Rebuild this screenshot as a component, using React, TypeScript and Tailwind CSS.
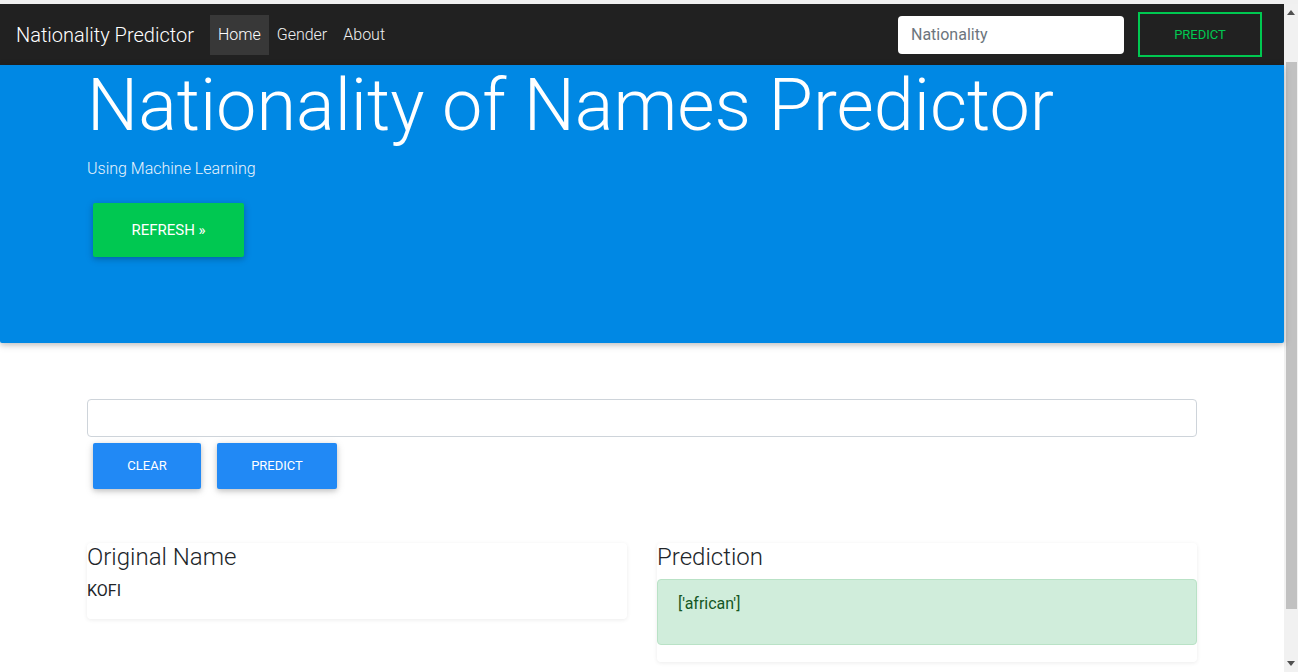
import React from 'react'

function Scrollbar() {
  return (
    <div className="w-[14px] shrink-0 bg-[#f1f1f1] flex flex-col">
      <div className="h-[17px] flex items-center justify-center">
        <svg width="8" height="5" viewBox="0 0 8 5">
          <path d="M0 5 L4 0 L8 5 Z" fill="#505050" />
        </svg>
      </div>
      <div className="mt-[41px] ml-[2px] w-[11px] h-[547px] bg-[#c1c1c1]" />
      <div className="flex-1" />
      <div className="h-[17px] flex items-center justify-center">
        <svg width="8" height="5" viewBox="0 0 8 5">
          <path d="M0 0 L8 0 L4 5 Z" fill="#505050" />
        </svg>
      </div>
    </div>
  )
}

function Navbar() {
  return (
    <nav className="h-[61px] shrink-0 bg-[#212121] flex items-center px-4">
      <span className="text-[20px] font-light text-white leading-[30px] mr-4">Nationality Predictor</span>
      <div className="flex items-center text-[16px] font-light text-[#f0f0f0]">
        <a className="h-[40px] px-2 flex items-center bg-[#383838] text-white">Home</a>
        <a className="h-[40px] px-2 flex items-center">Gender</a>
        <a className="h-[40px] px-2 flex items-center">About</a>
      </div>
      <div className="ml-auto flex items-center">
        <input
          className="w-[226px] h-[38px] rounded-[4px] bg-white px-[13px] text-[16px] text-[#495057] placeholder:text-[#6c757d] outline-none mr-2"
          placeholder="Nationality"
        />
        <button className="mx-[6px] w-[124px] h-[45px] border-2 border-[#00c851] text-[#00c851] text-[13px] uppercase">
          Predict
        </button>
      </div>
    </nav>
  )
}

export default function App() {
  return (
    <div className="h-screen w-full overflow-hidden flex flex-col bg-white font-['Roboto',sans-serif] text-[#212529]">
      <div className="h-[4px] shrink-0 bg-[#f0f0f0]" />
      <div className="flex flex-1 min-h-0">
        <div className="flex-1 min-w-0 flex flex-col">
          <Navbar />

          <section className="h-[278px] shrink-0 bg-[#0088e4] rounded-b-[2px] shadow-[0_2px_5px_0_rgba(0,0,0,0.16),0_2px_10px_0_rgba(0,0,0,0.12)] relative">
            <div className="w-[1140px] mx-auto px-[15px] pt-[5px]">
              <h1 className="text-[72px] font-light leading-[72px] text-white">Nationality of Names Predictor</h1>
              <p className="mt-[15px] text-[16px] leading-6 font-light text-[#e8f3fc]">Using Machine Learning</p>
              <button className="mt-[22px] ml-[6px] w-[151px] h-[54px] bg-[#00c851] text-white text-[15px] rounded-[2px] shadow-[0_2px_5px_0_rgba(0,0,0,0.16),0_2px_10px_0_rgba(0,0,0,0.12)]">
                REFRESH »
              </button>
            </div>
          </section>

          <main className="w-[1140px] mx-auto px-[15px] pt-[56px]">
            <input className="block w-full h-[38px] border border-[#ced4da] rounded-[4px] px-3 outline-none" />
            <div className="mt-[6px] ml-[6px] flex gap-4">
              <button className="w-[108px] h-[46px] bg-[#2189f5] text-white text-[13px] rounded-[2px] shadow-[0_2px_5px_0_rgba(0,0,0,0.16),0_2px_10px_0_rgba(0,0,0,0.12)]">
                CLEAR
              </button>
              <button className="w-[120px] h-[46px] bg-[#2189f5] text-white text-[13px] rounded-[2px] shadow-[0_2px_5px_0_rgba(0,0,0,0.16),0_2px_10px_0_rgba(0,0,0,0.12)]">
                PREDICT
              </button>
            </div>

            <div className="mt-[54px] grid grid-cols-2 gap-[30px] items-start">
              <div className="bg-white rounded-[4px] shadow-[0_1px_4px_0_rgba(0,0,0,0.08)]">
                <h3 className="text-[24px] font-light leading-[1.2] mb-[7px]">Original Name</h3>
                <p className="text-[16px] leading-6 mb-4">KOFI</p>
              </div>
              <div className="bg-white rounded-[4px] shadow-[0_1px_4px_0_rgba(0,0,0,0.08)]">
                <h3 className="text-[24px] font-light leading-[1.2] mb-[7px]">Prediction</h3>
                <div className="border border-[#b9e2c6] bg-[#d0eddb] rounded-[4px] px-5 py-3 mb-[17px]">
                  <p className="text-[16px] leading-6 mb-4 text-[#155724]">['african']</p>
                </div>
              </div>
            </div>
          </main>
        </div>
        <Scrollbar />
      </div>
    </div>
  )
}
